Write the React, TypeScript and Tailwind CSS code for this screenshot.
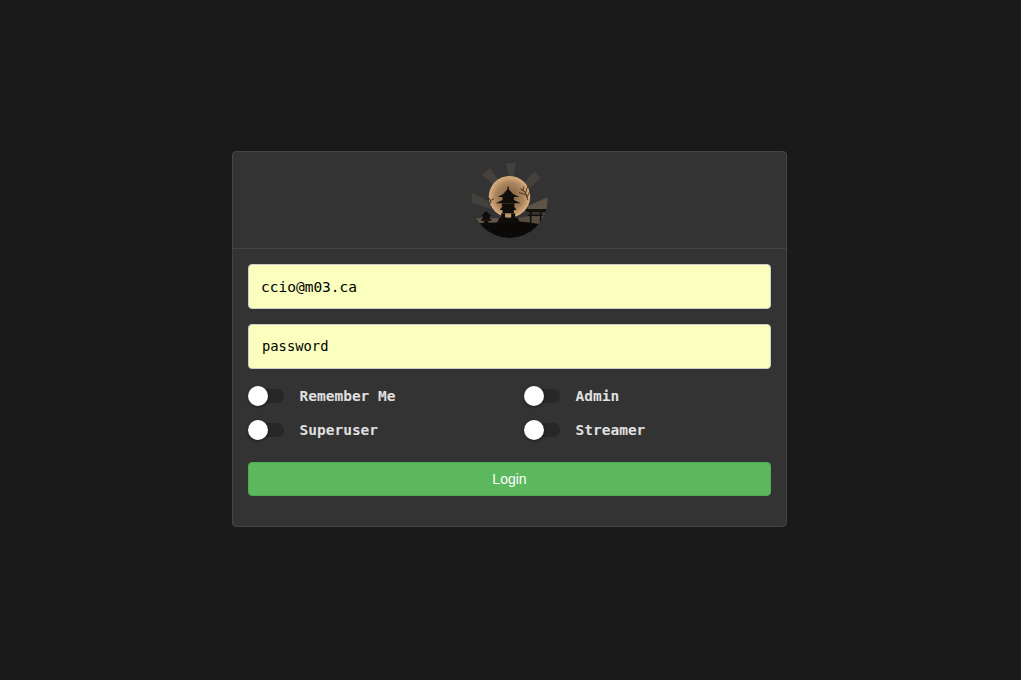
const Logo = () => (
    <svg width="80" height="80" viewBox="88.5 33 240 240" className="block">
        <defs>
            <clipPath id="disc">
                <circle cx="207" cy="150" r="114" />
            </clipPath>
            <radialGradient id="moon" cx="50%" cy="50%" r="50%">
                <stop offset="0%" stopColor="#7d5f3f" />
                <stop offset="65%" stopColor="#a8825a" />
                <stop offset="90%" stopColor="#cda274" />
                <stop offset="100%" stopColor="#ddb282" />
            </radialGradient>
        </defs>
        <g clipPath="url(#disc)">
            {/* rays */}
            <g fill="#8c7c68" fillOpacity="0.2">
                <polygon points="197,40 226,40 219,82 206,82" />
                <polygon points="122,72 150,55 180,100 166,110" />
                <polygon points="283,63 302,82 252,130 236,114" />
                <polygon points="92,127 92,158 152,176 152,158" />
            </g>
            <polygon points="322,142 322,178 262,182 262,168" fill="#9a866c" fillOpacity="0.4" />
            <polygon points="100,205 190,205 190,226 100,226" fill="#7a6650" fillOpacity="0.7" />
            <polygon points="225,205 320,190 320,230 225,230" fill="#7a6650" fillOpacity="0.5" />
            <circle cx="207" cy="140" r="62" fill="url(#moon)" />
            {/* branches */}
            <g stroke="#2a2015" strokeWidth="2.4" fill="none">
                <path d="M262 150 L255 128 L240 116 M255 128 L262 108 M256 134 L236 128 M259 142 L268 124 M247 122 L250 110" />
                <path d="M152 158 L146 144 M150 152 L160 146 M152 158 L144 160" />
            </g>
            {/* ground */}
            <path d="M90 218 Q150 222 200 214 Q250 212 330 228 L330 280 L90 280 Z" fill="#0b0a08" />
            {/* pagoda */}
            <g fill="#100d0a">
                <rect x="201" y="110" width="4" height="12" />
                <polygon points="203,116 218,132 236,141 172,141 188,132" />
                <rect x="186" y="141" width="34" height="9" />
                <polygon points="186,150 220,150 240,160 166,160" />
                <rect x="184" y="160" width="38" height="8" />
                <polygon points="186,168 220,168 228,180 178,180" />
                <rect x="186" y="180" width="34" height="10" />
                <rect x="182" y="190" width="12" height="14" />
                <rect x="212" y="190" width="12" height="14" />
                <polygon points="176,204 232,204 238,218 170,218" />
            </g>
            <rect x="196" y="192" width="14" height="10" fill="#b89468" />
            {/* lantern */}
            <g fill="#100d0a">
                <polygon points="137,183 153,198 122,198" />
                <rect x="127" y="198" width="21" height="9" />
                <polygon points="122,207 153,207 153,212 122,212" />
                <rect x="130" y="212" width="14" height="12" />
            </g>
            {/* torii */}
            <g fill="#14110d">
                <polygon points="255,177 320,177 316,186 260,186" />
                <rect x="262" y="194" width="46" height="4" />
                <rect x="268" y="184" width="5" height="44" />
                <rect x="298" y="184" width="5" height="44" />
            </g>
        </g>
    </svg>
)

const toggles = ['Remember Me', 'Admin', 'Superuser', 'Streamer']

const Toggle = ({ label }: { label: string }) => (
    <div className="flex items-center h-[24px]">
        <div className="relative w-[36px] h-[14px] mb-[2px] rounded-full bg-[#272727]">
            <div className="absolute left-0 -top-[3px] w-[20px] h-[20px] rounded-full bg-white shadow-[0_1px_3px_rgba(0,0,0,0.5)]" />
        </div>
        <span className="ml-[15.5px] text-[14.5px] font-bold text-[#e0e0e0] font-['DejaVu_Sans_Mono',monospace]">
            {label}
        </span>
    </div>
)

export default function App() {
    return (
        <div className="min-h-screen bg-[#1a1a1a] flex items-center justify-center pr-[2px] pb-[2px] font-['Liberation_Sans',sans-serif]">
            <div className="w-[555px] h-[376px] bg-[#333333] border border-[#444444] rounded-[4px]">
                <div className="h-[97px] flex items-center justify-center border-b border-[#444444] pt-[1px]">
                    <Logo />
                </div>
                <form className="px-[15px] pt-[15px] flex flex-col">
                    <input
                        readOnly
                        value="ccio@m03.ca"
                        className="h-[45px] w-full px-[12px] bg-[#faffbd] border border-[#cccccc] rounded-[4px] text-[14.5px] text-black font-['DejaVu_Sans_Mono',monospace] outline-none"
                    />
                    <input
                        readOnly
                        value="password"
                        className="mt-[15px] h-[45px] w-full px-[13px] pb-[2px] bg-[#faffbd] border border-[#cccccc] rounded-[4px] text-[13.8px] text-black font-['DejaVu_Sans_Mono',monospace] outline-none"
                    />
                    <div className="mt-[16px] grid grid-cols-2 gap-x-[29px] gap-y-[10px]">
                        {toggles.map((t) => (
                            <Toggle key={t} label={t} />
                        ))}
                    </div>
                    <button
                        type="button"
                        className="mt-[19px] h-[34px] w-full rounded-[4px] bg-[#5cb85c] border border-[#4cae4c] text-white text-[14px]">
                        Login
                    </button>
                </form>
            </div>
        </div>
    )
}
